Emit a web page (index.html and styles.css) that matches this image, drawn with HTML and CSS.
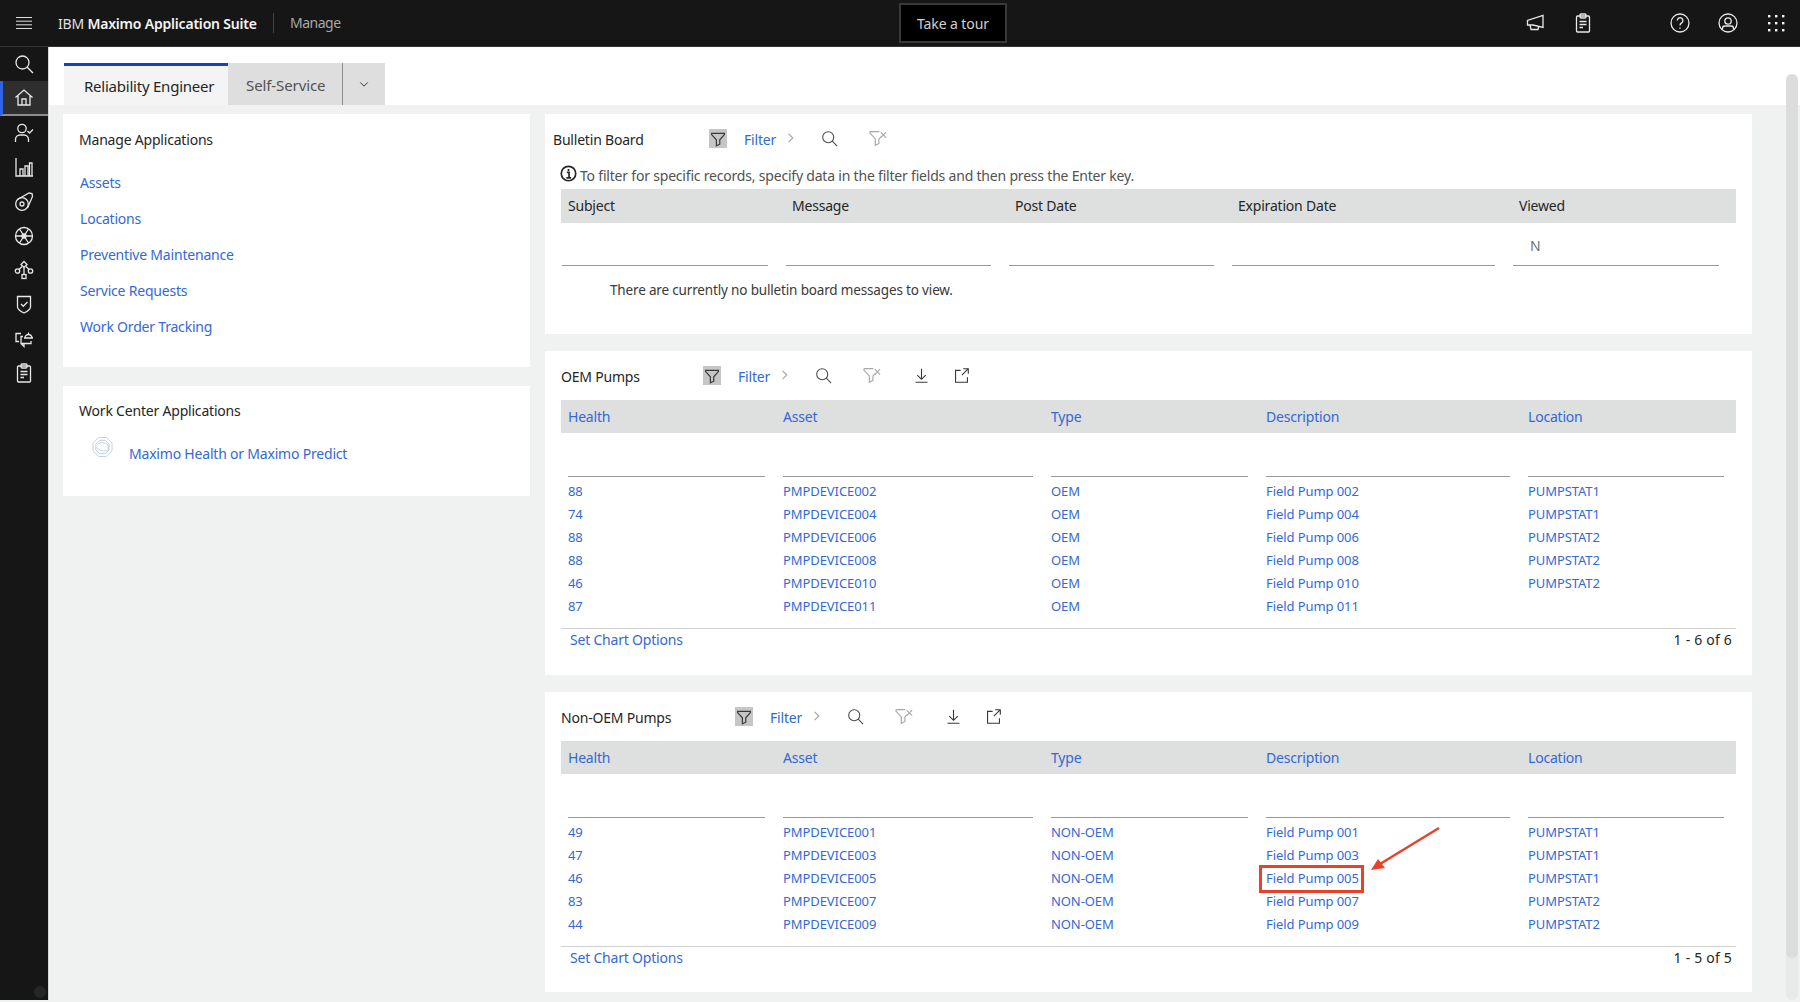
FILE: index.html
```html
<!DOCTYPE html>
<html lang="en">
<head>
<meta charset="utf-8">
<title>IBM Maximo Application Suite - Manage</title>
<link rel="stylesheet" href="styles.css">
</head>
<body>
<svg class="defs" width="0" height="0" aria-hidden="true">
  <symbol id="i-search" viewBox="0 0 20 20"><circle cx="8.5" cy="8.5" r="6.5"/><path d="M13.2 13.2 19 19"/></symbol>
  <symbol id="i-funnel" viewBox="0 0 20 20"><path d="M2 3h16v1.5L12.2 11v5.5L8 18.5V11L2 4.5z"/></symbol>
  <symbol id="i-funnel-x" viewBox="0 0 20 20"><path d="M1 3H11.500M1 3v1.500L7 11v7l4-2v-5l2.500-2.500"/><path d="M13 3.500l6 6M19 3.500l-6 6"/></symbol>
  <symbol id="i-download" viewBox="0 0 20 20"><path d="M10 2v12M5 9.5l5 5 5-5M3 18h14"/></symbol>
  <symbol id="i-launch" viewBox="0 0 20 20"><path d="M9 4H3v14h14v-6"/><path d="M12 2h6v6M18 2l-7.5 7.5"/></symbol>
  <symbol id="i-chev" viewBox="0 0 20 20"><path d="M6 3l7 7-7 7"/></symbol>
  <symbol id="i-clip" viewBox="0 0 20 20"><rect x="3.5" y="3" width="13" height="16" rx="1"/><rect x="7" y="1" width="6" height="4" rx="1"/><path d="M6.5 8.5h7M6.5 11.5h7M6.5 14.5h3.5"/></symbol>
</svg>

<header class="topbar">
  <svg class="hamburger" viewBox="0 0 16 12"><path d="M0 .5h16M0 4.2h16M0 7.8h16M0 11.5h16"/></svg>
  <div class="brand">IBM <b>Maximo Application Suite</b></div>
  <div class="app-name">Manage</div>
  <button class="tour">Take a tour</button>
  <div class="top-actions">
    <span class="top-icon top-announce"><svg class="ico" viewBox="0 0 20 20"><path d="M18 2.5v12L8 12H2.5V7.5zM5 12l1 4.5h7l.6-2.8"/></svg></span>
    <span class="top-icon top-clip"><svg class="ico"><use href="#i-clip"/></svg></span>
    <span class="top-icon top-help"><svg class="ico" viewBox="0 0 20 20"><circle cx="10" cy="10" r="9"/><path d="M7.3 7.5a2.8 2.8 0 1 1 4.3 2.4c-1 .6-1.6 1.2-1.6 2.6M10 14.5v1.2"/></svg></span>
    <span class="top-icon top-user"><svg class="ico" viewBox="0 0 20 20"><circle cx="10" cy="10" r="9"/><circle cx="10" cy="8" r="3.2"/><path d="M4.5 16.5v-1.2c0-1.3 1-2.3 2.3-2.3h6.4c1.3 0 2.3 1 2.3 2.3v1.2"/></svg></span>
    <span class="top-icon top-grid"><svg class="ico dots" viewBox="0 0 20 20"><rect x="2" y="2" width="2.4" height="2.4"/><rect x="9" y="2" width="2.4" height="2.4"/><rect x="16" y="2" width="2.4" height="2.4"/><rect x="2" y="9" width="2.4" height="2.4"/><rect x="9" y="9" width="2.4" height="2.4"/><rect x="16" y="9" width="2.4" height="2.4"/><rect x="2" y="16" width="2.4" height="2.4"/><rect x="9" y="16" width="2.4" height="2.4"/><rect x="16" y="16" width="2.4" height="2.4"/></svg></span>
  </div>
</header>

<div class="shell">
  <nav class="sidenav">
    <a class="nav-item"><svg class="ico"><use href="#i-search"/></svg></a>
    <a class="nav-item active"><svg class="ico" viewBox="0 0 20 20"><path d="M1.5 10.5 10 3l8.5 7.5M4 9v9h12V9M8 18v-6h4v6"/></svg></a>
    <a class="nav-item"><svg class="ico" viewBox="0 0 20 20"><circle cx="8" cy="5.5" r="4.2"/><path d="M1.5 19v-2.5c0-2.5 2-4.5 4.5-4.5h4c2.500 0 4.500 2 4.500 4.500V19M13.500 8l2 2 3.500-3.500"/></svg></a>
    <a class="nav-item"><svg class="ico" viewBox="0 0 20 20"><path d="M2 1v18h17M6 19v-7h3v7M11 19V9h3v10M15.500 19V6H18v13"/></svg></a>
    <a class="nav-item"><svg class="ico" viewBox="0 0 20 20"><circle cx="8" cy="13" r="6.300"/><circle cx="8" cy="13" r="2"/><path d="M3.500 8.500 15 2l3 .5.500 3L13.500 17"/></svg></a>
    <a class="nav-item"><svg class="ico" viewBox="0 0 20 20"><circle cx="10" cy="10" r="8.500"/><path d="M5.500 3 14.500 17M14.500 3 5.500 17M1.500 10h17"/><circle cx="10" cy="10" r="2"/></svg></a>
    <a class="nav-item"><svg class="ico" viewBox="0 0 20 20"><path d="M10 1.500 13 4.500 10 7.500 7 4.500z"/><circle cx="3.500" cy="11" r="2.200"/><circle cx="16.500" cy="11" r="2.200"/><rect x="8" y="14.500" width="4" height="4"/><path d="M8 6.500 5 9.500M12 6.500l3 3M10 7.500v7"/></svg></a>
    <a class="nav-item"><svg class="ico" viewBox="0 0 20 20"><path d="M3.500 2.500h13v10.500c0 2.500-3.500 4.500-6.500 6-3-1.500-6.500-3.500-6.500-6z"/><path d="M7 10l2.300 2.300L13.500 8"/></svg></a>
    <a class="nav-item"><svg class="ico" viewBox="0 0 20 20"><path d="M7 4.500H2v8h3M10 9H19M11 9a3.500 3.500 0 0 1 7 0M14.500 3.500v2M17 12v2.500H7V7.500h2M7 14.500l3 3v-3"/></svg></a>
    <a class="nav-item"><svg class="ico"><use href="#i-clip"/></svg></a>
    <span class="nav-dot"></span>
  </nav>

  <main class="main">
    <div class="tabs">
      <div class="tab tab-active">Reliability Engineer</div>
      <div class="tab tab-off">Self-Service</div>
      <div class="tab tab-more"><svg class="chev-down" viewBox="0 0 12 8"><path d="M1.500 1.500 6 6l4.500-4.500"/></svg></div>
    </div>

    <div class="content">
      <div class="col-left">
        <section class="card apps">
          <h2 class="card-title">Manage Applications</h2>
          <ul class="app-list">
            <li><a>Assets</a></li>
            <li><a>Locations</a></li>
            <li><a>Preventive Maintenance</a></li>
            <li><a>Service Requests</a></li>
            <li><a>Work Order Tracking</a></li>
          </ul>
        </section>
        <section class="card workcenter">
          <h2 class="card-title">Work Center Applications</h2>
          <div class="wc-row">
            <svg class="wc-icon" viewBox="0 0 22 22"><path d="M7 1h8l6 6v8l-6 6H7l-6-6V7z"/><path d="M8 4h6l4 4v6l-4 4H8l-4-4V8z"/><path d="M6 8c3-2 8-2 11 1v6"/><path d="M4 11c3 3 8 5 13 4"/></svg>
            <a>Maximo Health or Maximo Predict</a>
          </div>
        </section>
      </div>

      <div class="col-right">
        <section class="card panel bulletin">
          <div class="toolbar">
            <h3 class="panel-title title-bulletin">Bulletin Board</h3>
            <span class="filter-box"><svg class="ico"><use href="#i-funnel"/></svg></span>
            <a class="filter-link">Filter</a>
            <span class="tool tool-chev"><svg class="ico"><use href="#i-chev"/></svg></span>
            <span class="tool tool-search"><svg class="ico"><use href="#i-search"/></svg></span>
            <span class="tool tool-clear"><svg class="ico"><use href="#i-funnel-x"/></svg></span>
          </div>
          <p class="hint"><svg class="info" viewBox="0 0 16 16"><circle cx="8" cy="8" r="6.800"/><path class="info-i" d="M6.500 7h2v5M6 12.200h4.500M8 3.800v1.800"/></svg>To filter for specific records, specify data in the filter fields and then press the Enter key.</p>
          <div class="grid-b head">
            <div>Subject</div><div>Message</div><div>Post Date</div><div>Expiration Date</div><div>Viewed</div>
          </div>
          <div class="grid-b filters">
            <div></div><div></div><div></div><div></div><div class="val">N</div>
          </div>
          <p class="empty">There are currently no bulletin board messages to view.</p>
        </section>

        <section class="card panel">
          <div class="toolbar">
            <h3 class="panel-title title-oem">OEM Pumps</h3>
            <span class="filter-box"><svg class="ico"><use href="#i-funnel"/></svg></span>
            <a class="filter-link">Filter</a>
            <span class="tool tool-chev"><svg class="ico"><use href="#i-chev"/></svg></span>
            <span class="tool tool-search"><svg class="ico"><use href="#i-search"/></svg></span>
            <span class="tool tool-clear"><svg class="ico"><use href="#i-funnel-x"/></svg></span>
            <span class="tool tool-dl"><svg class="ico"><use href="#i-download"/></svg></span>
            <span class="tool tool-launch"><svg class="ico"><use href="#i-launch"/></svg></span>
          </div>
          <div class="grid-t head links"><div>Health</div><div>Asset</div><div>Type</div><div>Description</div><div>Location</div></div>
          <div class="grid-t filters"><div></div><div></div><div></div><div></div><div></div></div>
          <div class="rows">
            <div class="grid-t row"><a>88</a><a>PMPDEVICE002</a><a>OEM</a><a>Field Pump 002</a><a>PUMPSTAT1</a></div>
            <div class="grid-t row"><a>74</a><a>PMPDEVICE004</a><a>OEM</a><a>Field Pump 004</a><a>PUMPSTAT1</a></div>
            <div class="grid-t row"><a>88</a><a>PMPDEVICE006</a><a>OEM</a><a>Field Pump 006</a><a>PUMPSTAT2</a></div>
            <div class="grid-t row"><a>88</a><a>PMPDEVICE008</a><a>OEM</a><a>Field Pump 008</a><a>PUMPSTAT2</a></div>
            <div class="grid-t row"><a>46</a><a>PMPDEVICE010</a><a>OEM</a><a>Field Pump 010</a><a>PUMPSTAT2</a></div>
            <div class="grid-t row"><a>87</a><a>PMPDEVICE011</a><a>OEM</a><a>Field Pump 011</a><a></a></div>
          </div>
          <div class="foot"><a>Set Chart Options</a><span>1 - 6 of 6</span></div>
        </section>

        <section class="card panel">
          <div class="toolbar">
            <h3 class="panel-title title-non">Non-OEM Pumps</h3>
            <span class="filter-box"><svg class="ico"><use href="#i-funnel"/></svg></span>
            <a class="filter-link">Filter</a>
            <span class="tool tool-chev"><svg class="ico"><use href="#i-chev"/></svg></span>
            <span class="tool tool-search"><svg class="ico"><use href="#i-search"/></svg></span>
            <span class="tool tool-clear"><svg class="ico"><use href="#i-funnel-x"/></svg></span>
            <span class="tool tool-dl"><svg class="ico"><use href="#i-download"/></svg></span>
            <span class="tool tool-launch"><svg class="ico"><use href="#i-launch"/></svg></span>
          </div>
          <div class="grid-t head links"><div>Health</div><div>Asset</div><div>Type</div><div>Description</div><div>Location</div></div>
          <div class="grid-t filters"><div></div><div></div><div></div><div></div><div></div></div>
          <div class="rows">
            <div class="grid-t row"><a>49</a><a>PMPDEVICE001</a><a>NON-OEM</a><a>Field Pump 001</a><a>PUMPSTAT1</a></div>
            <div class="grid-t row"><a>47</a><a>PMPDEVICE003</a><a>NON-OEM</a><a>Field Pump 003</a><a>PUMPSTAT1</a></div>
            <div class="grid-t row"><a>46</a><a>PMPDEVICE005</a><a>NON-OEM</a><a class="marked">Field Pump 005</a><a>PUMPSTAT1</a></div>
            <div class="grid-t row"><a>83</a><a>PMPDEVICE007</a><a>NON-OEM</a><a>Field Pump 007</a><a>PUMPSTAT2</a></div>
            <div class="grid-t row"><a>44</a><a>PMPDEVICE009</a><a>NON-OEM</a><a>Field Pump 009</a><a>PUMPSTAT2</a></div>
          </div>
          <div class="foot"><a>Set Chart Options</a><span>1 - 5 of 5</span></div>
        </section>
      </div>
    </div>
  </main>
</div>

<div class="scroll-track"><div class="scroll-thumb"></div></div>
<svg class="arrow" viewBox="0 0 80 50"><path class="arrow-line" d="M74 3 15 39"/><path class="arrow-head" d="M6 45 13 34 20 43z"/></svg>
</body>
</html>
```

FILE: styles.css
```css
*, *::before, *::after { box-sizing: border-box; }
html, body { margin: 0; padding: 0; }
body {
  width: 1800px;
  height: 1002px;
  overflow: hidden;
  position: relative;
  background: #f0f1f1;
  font-family: "Noto Sans", "Open Sans", Arial, sans-serif;
  font-size: 14px;
  letter-spacing: -0.2px;
  color: #262626;
}
a { color: #3369d6; text-decoration: none; }
h2, h3, p, ul { margin: 0; padding: 0; font-weight: 400; }
ul { list-style: none; }
.defs { position: absolute; }

.ico { width: 20px; height: 20px; fill: none; stroke: currentColor; stroke-width: 1.3; display: block; }

/* top bar */
.topbar {
  height: 47px;
  background: #161616;
  color: #f4f4f4;
  display: flex;
  align-items: center;
  border-bottom: 1px solid #333;
}
.hamburger { width: 16px; height: 12px; margin-left: 16px; fill: none; stroke: #e0e0e0; stroke-width: 1; flex: none; }
.brand { margin-left: 26px; width: 215px; white-space: nowrap; font-size: 14px; color: #e0e0e0; }
.brand b { font-weight: 600; color: #f4f4f4; }
.app-name { padding-left: 16px; width: 80px; border-left: 1px solid #444; line-height: 20px; color: #a8a8a8; letter-spacing: -0.5px; }
.tour {
  margin-left: 546px;
  width: 108px;
  height: 40px;
  background: #000;
  border: 2px solid #393939;
  color: #d0d0d0;
  font: inherit;
  font-size: 14px;
  letter-spacing: -0.1px;
  padding: 0;
}
.top-actions { display: flex; align-items: center; margin-left: auto; margin-right: 14px; }
.top-icon { width: 20px; display: block; color: #e8e8e8; }
.top-clip { margin-left: 28px; }
.top-help { margin-left: 77px; }
.top-user { margin-left: 28px; }
.top-grid { margin-left: 28px; }
.dots { fill: #f4f4f4; stroke: none; }

/* shell */
.shell { display: flex; height: 953px; }
.sidenav {
  width: 49px;
  flex: none;
  background: #161616;
  border-right: 1px solid #d8d8d8;
  color: #e8e8e8;
  position: relative;
}
.nav-item { height: 34.3px; display: flex; align-items: center; justify-content: center; color: #e8e8e8; }
.nav-item.active { background: #2e2e2e; border-left: 3px solid #2f62e8; border-bottom: 2px solid #8d8d8d; padding-right: 3px; }
.nav-dot { position: absolute; left: 34px; bottom: 2px; width: 12px; height: 12px; border-radius: 50%; background: #262626; }

.main { flex: 1; min-width: 0; }

/* tabs */
.tabs { height: 58px; background: #fff; padding: 16px 0 0 15px; display: flex; }
.tab { height: 42px; display: flex; align-items: center; font-size: 15px; letter-spacing: -0.23px; }
.tab-active { width: 164px; padding-left: 20px; background: #f4f4f4; border-top: 3px solid #1541c4; color: #262626; }
.tab-off { width: 115px; padding: 2px 0 0 18px; background: #dedede; color: #525252; border-right: 1px solid #8d8d8d; letter-spacing: -0.1px; }
.tab-more { width: 42px; background: #dedede; justify-content: center; }
.chev-down { width: 10px; height: 7px; fill: none; stroke: #393939; stroke-width: 1.2; }

/* content */
.content { display: grid; grid-template-columns: 467px 1207px; column-gap: 15px; padding: 9px 0 0 14px; }
.col-left { display: flex; flex-direction: column; gap: 19px; }
.col-right { display: flex; flex-direction: column; gap: 17px; }
.card { background: #fff; }

.apps { height: 253px; padding: 16px 0 0 16px; }
.card-title { font-size: 14px; line-height: 20px; color: #262626; }
.app-list { margin-top: 15px; }
.app-list li { height: 36px; line-height: 36px; padding-left: 1px; }
.workcenter { height: 110px; padding: 15px 0 0 16px; }
.wc-row { display: flex; align-items: center; margin-top: 16px; height: 26px; }
.wc-icon { width: 21px; height: 22px; margin-left: 13px; margin-right: 16px; margin-top: -6px; fill: none; stroke: #bcd0e6; stroke-width: 1; flex: none; }
.wc-row a { margin-top: 6px; }

/* panels */
.panel { padding: 10px 16px 0 16px; }
.bulletin { height: 220px; }
.toolbar { height: 30px; display: flex; align-items: center; margin-bottom: 9px; }
.bulletin .toolbar { margin-left: -8px; margin-bottom: 0; }
.panel-title { font-size: 14px; white-space: nowrap; }
.title-bulletin { width: 156px; }
.title-oem { width: 142px; }
.title-non { width: 174px; }
.filter-box { width: 18px; height: 19px; background: #c6c6c6; color: #393939; display: flex; align-items: center; justify-content: center; margin-top: -1px; }
.filter-box .ico { width: 16px; height: 16px; stroke-width: 1.5; }
.filter-link { width: 37px; margin-left: 17px; margin-top: 1px; }
.tool { width: 20px; display: flex; justify-content: center; margin-top: -2px; }
.tool-chev { color: #a8a8a8; }
.tool-chev .ico { width: 12px; height: 12px; stroke-width: 2; }
.tool-search { margin-left: 18px; color: #4d4d4d; }
.tool-search .ico { width: 17px; height: 17px; }
.tool-clear { margin-left: 29px; color: #a8a8a8; }
.tool-clear .ico { width: 18px; height: 18px; }
.tool-dl { margin-left: 29px; color: #393939; }
.tool-dl .ico { width: 17px; height: 17px; }
.tool-launch { margin-left: 20px; color: #393939; }
.tool-launch .ico { width: 17px; height: 17px; }

.hint { height: 35px; padding: 9px 0 0 0; line-height: 20px; color: #525252; display: flex; align-items: center; white-space: nowrap; }
.info { width: 17px; height: 17px; margin: -5px 3px 0 -1px; fill: none; stroke: #262626; stroke-width: 1.6; flex: none; }
.info-i { stroke-width: 1.6; }

.head { height: 33px; background: #dedfdf; align-items: center; color: #262626; }
.head.links { color: #3369d6; }
.grid-t { display: grid; grid-template-columns: 197px 250px 197px 244px 196px; column-gap: 18px; padding-left: 7px; }
.grid-b { display: grid; grid-template-columns: 206px 205px 205px 263px 206px; column-gap: 18px; padding-left: 1px; }
.grid-b.head { height: 34px; padding-bottom: 2px; }
.grid-b.head > div { padding-left: 6px; }
.filters { height: 43px; align-items: end; }
.filters > div { height: 100%; border-bottom: 1px solid #9a9a9a; }
.grid-t.filters { height: 44px; }
.val { color: #6f6f6f; padding: 13px 0 0 17px; }
.empty { margin: 14px 0 0 49px; color: #393939; line-height: 20px; font-size: 13.5px; letter-spacing: -0.16px; }
.rows { margin-top: 3px; }
.row { height: 23px; line-height: 23px; font-size: 13px; letter-spacing: -0.08px; white-space: nowrap; }
.foot {
  margin-top: 10px;
  padding: 0 4px 0 9px;
  height: 47px;
  border-top: 1px solid #d0d0d0;
  display: flex;
  justify-content: space-between;
  align-items: flex-start;
  line-height: 21px;
}
.panel:last-child .foot { height: 46px; }
.foot span { color: #262626; font-size: 14px; letter-spacing: 0.2px; }
.marked { position: relative; }
.marked::after {
  content: "";
  position: absolute;
  left: -7px;
  top: -2px;
  width: 105px;
  height: 28px;
  border: 3px solid #e6432a;
}

/* scrollbar + annotation overlays */
.scroll-track { position: absolute; left: 1786px; top: 74px; width: 12px; height: 926px; background: #e9e9e9; border-radius: 6px; }
.scroll-thumb { height: 884px; background: #dcdcdc; border-radius: 6px; }
.arrow { position: absolute; left: 1365px; top: 825px; width: 80px; height: 50px; }
.arrow-line { stroke: #e6432a; stroke-width: 2.500; fill: none; }
.arrow-head { fill: #e6432a; }
```
